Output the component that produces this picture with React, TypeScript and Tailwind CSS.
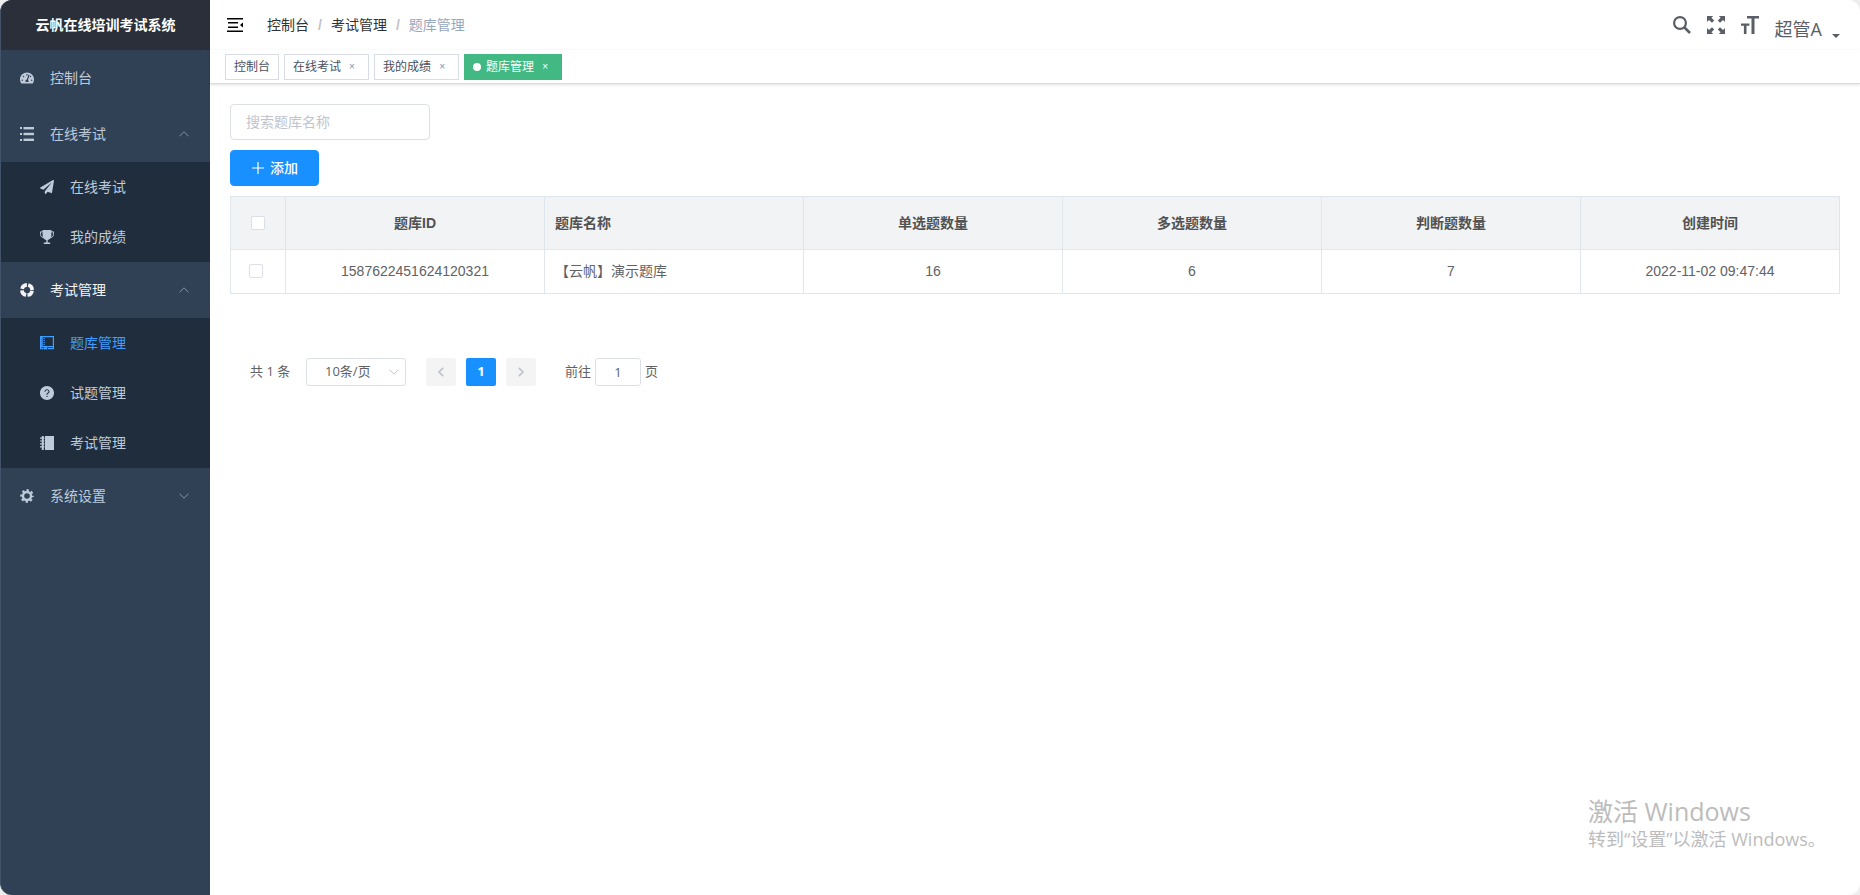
import React from 'react';
import clsx from 'clsx';
import { FaPaperPlane, FaTachometerAlt } from 'react-icons/fa';
import { AiFillQuestionCircle } from 'react-icons/ai';

const ListIcon = () => (
  <svg width="14" height="14" viewBox="0 0 14 14" fill="currentColor">
    <rect x="0" y="0" width="2" height="2" />
    <rect x="0" y="6" width="2" height="2" />
    <rect x="0" y="12" width="2" height="2" />
    <rect x="3.5" y="0" width="10.5" height="2.4" />
    <rect x="3.5" y="5.8" width="10.5" height="2.4" />
    <rect x="3.5" y="11.6" width="10.5" height="2.4" />
  </svg>
);

const TrophyIcon = () => (
  <svg width="14" height="14" viewBox="0 0 14 14" fill="currentColor">
    <path d="M2.6 0h8.8v5.5c0 2.6-1.7 4.2-3.7 4.5v2.6h2.5V14H3.8v-1.4h2.5V10c-2-.3-3.7-1.9-3.7-4.500z" />
    <path
      d="M3 1.800H.6v2.700c0 1.700 1 2.800 2.600 3.100M11 1.800h2.400v2.700c0 1.700-1 2.800-2.600 3.100"
      fill="none"
      stroke="currentColor"
      strokeWidth="1"
    />
  </svg>
);

const LifeRingIcon = () => (
  <svg width="14" height="14" viewBox="0 0 14 14" fill="none" stroke="currentColor">
    <circle cx="7" cy="7" r="5.1" strokeWidth="3.6" strokeDasharray="6.6 1.41" strokeDashoffset="-0.7" />
  </svg>
);

const BankIcon = () => (
  <svg width="14" height="14" viewBox="0 0 14 14" fill="none" stroke="currentColor">
    <path d="M.6.6h12.800v10H.6z" strokeWidth="1.200" />
    <path d="M1.700 1v9.500" strokeWidth="2.400" opacity="0.8" />
    <path d="M4.200 2v7.500" strokeWidth="1.200" strokeDasharray="1 1" />
    <path d="M.6 10.500v2.200h3M8 12.700h5.400v-2" strokeWidth="1.200" />
    <path d="M4 11.200h3.200V14l-1.600-1L4 14z" fill="currentColor" stroke="none" />
  </svg>
);

const NotebookIcon = () => (
  <svg width="14" height="14" viewBox="0 0 14 14" fill="currentColor">
    <path d="M1.800 0h2v14h-2zM5 0h9v14H5z" />
    <path d="M0 1.500h4.500v1.200H0zM0 4.400h4.500v1.200H0zM0 7.300h4.500v1.200H0zM0 10.200h4.500v1.200H0z" />
  </svg>
);

const GearIcon = () => (
  <svg width="14" height="14" viewBox="0 0 14 14" fill="none" stroke="currentColor">
    <circle cx="7" cy="7" r="4" strokeWidth="2.4" />
    <circle cx="7" cy="7" r="5.8" strokeWidth="2" strokeDasharray="2.4 2.155" strokeDashoffset="1.2" />
  </svg>
);

const FoldIcon = () => (
  <svg width="16" height="14" viewBox="0 0 16 14" fill="currentColor">
    <path d="M0 0h16v1.500H0zM1 4h10v1.500H1zM1 8.500h10V10H1zM0 12.500h16V14H0zM16 4.500v5L13 7z" />
  </svg>
);

const SearchIcon = () => (
  <svg width="18" height="18" viewBox="0 0 18 18" fill="none" stroke="currentColor">
    <circle cx="7" cy="7" r="5.900" strokeWidth="2.200" />
    <path d="M11 11l6 6" strokeWidth="2.600" />
  </svg>
);

const FullscreenIcon = () => (
  <svg width="18" height="18" viewBox="0 0 18 18" fill="currentColor">
    <path d="M0 0h6.200L4.400 1.800l2.800 2.800-2.200 2.200L2 3.900 0 6zM18 0v6l-2-2.100-3 2.900-2.200-2.200 2.800-2.800L11.800 0zM0 18v-6l2 2.100 3-2.900 2.200 2.200-2.800 2.800L6.200 18zM18 18h-6.200l1.800-1.800-2.800-2.800 2.200-2.200 3 2.900 2-2.100z" />
  </svg>
);

const FontSizeIcon = () => (
  <svg width="18" height="18" viewBox="0 0 18 18" fill="currentColor">
    <path d="M6 0h12v2.600h-4.500V18h-3V2.600H6zM0 7.500h8.400v2.300H5.500V18h-2.600V9.800H0z" />
  </svg>
);

const PlusIcon = () => (
  <svg width="14" height="14" viewBox="0 0 14 14" stroke="currentColor" strokeWidth="1.200">
    <path d="M7 1v12M1 7h12" />
  </svg>
);

const Arrow = ({ up }: { up?: boolean }) => (
  <svg width="10" height="6" viewBox="0 0 10 6" fill="none" stroke="currentColor">
    <path d={up ? 'M.5 5.300L5 .8l4.500 4.500' : 'M.5.7L5 5.200 9.500.7'} />
  </svg>
);

const PageArrow = ({ next }: { next?: boolean }) => (
  <svg width="6" height="10" viewBox="0 0 6 10" fill="none" stroke="currentColor" strokeWidth="1.700">
    <path d={next ? 'M.8.8L5 5 .8 9.200' : 'M5.200.8L1 5l4.200 4.200'} />
  </svg>
);

interface SubItem {
  title: string;
  icon: React.ReactNode;
  active?: boolean;
}

interface MenuItem {
  title: string;
  icon: React.ReactNode;
  open?: boolean;
  active?: boolean;
  children?: SubItem[];
}

const menus: MenuItem[] = [
  { title: '控制台', icon: <FaTachometerAlt size={14} /> },
  {
    title: '在线考试',
    icon: <ListIcon />,
    open: true,
    children: [
      { title: '在线考试', icon: <FaPaperPlane size={14} /> },
      { title: '我的成绩', icon: <TrophyIcon /> },
    ],
  },
  {
    title: '考试管理',
    icon: <LifeRingIcon />,
    open: true,
    active: true,
    children: [
      { title: '题库管理', icon: <BankIcon />, active: true },
      { title: '试题管理', icon: <AiFillQuestionCircle size={16} /> },
      { title: '考试管理', icon: <NotebookIcon /> },
    ],
  },
  { title: '系统设置', icon: <GearIcon />, children: [] },
];

const tags = [
  { title: '控制台', closable: false },
  { title: '在线考试', closable: true },
  { title: '我的成绩', closable: true },
  { title: '题库管理', closable: true, active: true },
];

const columns = ['题库ID', '题库名称', '单选题数量', '多选题数量', '判断题数量', '创建时间'];

const rows = [['1587622451624120321', '【云帆】演示题库', '16', '6', '7', '2022-11-02 09:47:44']];

const Checkbox = ({ label }: { label: string }) => (
  <input
    type="checkbox"
    aria-label={label}
    className="block size-[14px] appearance-none rounded-xs border border-[#dcdfe6] bg-white checked:bg-[#1890ff]"
  />
);

const Sidebar = () => (
  <aside className="w-[210px] shrink-0 overflow-hidden rounded-l-xl border-l border-[#43546a] bg-[#304156]">
    <h1 className="flex h-[50px] items-center justify-center bg-[#2b2f3a] text-sm font-bold text-white">
      云帆在线培训考试系统
    </h1>
    <nav className="text-sm text-[#bfcbd9]">
      {menus.map((menu) => (
        <div key={menu.title}>
          <a
            href="#"
            className={clsx('flex h-14 items-center pr-[21px] pl-[19px]', menu.active && 'text-[#f4f4f5]')}
          >
            <span className="mr-4 flex w-[14px] justify-center">{menu.icon}</span>
            <span className="flex-1">{menu.title}</span>
            {menu.children && (
              <span className="text-[#8391a2]">
                <Arrow up={menu.open} />
              </span>
            )}
          </a>
          {menu.open && (
            <div className="bg-[#1f2d3d]">
              {menu.children?.map((item) => (
                <a
                  key={item.title}
                  href="#"
                  className={clsx('flex h-[50px] items-center pl-[39px]', item.active && 'text-[#409eff]')}
                >
                  <span className="mr-4 flex w-[14px] justify-center *:shrink-0">{item.icon}</span>
                  {item.title}
                </a>
              ))}
            </div>
          )}
        </div>
      ))}
    </nav>
  </aside>
);

const Navbar = () => (
  <header className="flex h-[50px] items-center justify-between pr-5 pl-[17px] shadow-[0_1px_4px_rgba(0,21,41,0.08)]">
    <div className="flex items-center gap-6">
      <button type="button" aria-label="折叠菜单" className="text-black">
        <FoldIcon />
      </button>
      <nav className="flex items-center gap-[9px] text-sm text-[#303133]">
        <a href="#">控制台</a>
        <span className="font-bold text-[#c0c4cc]">/</span>
        <a href="#">考试管理</a>
        <span className="font-bold text-[#c0c4cc]">/</span>
        <span className="text-[#97a8be]">题库管理</span>
      </nav>
    </div>
    <div className="flex items-center gap-4 text-[#5a5e66]">
      <button type="button" aria-label="搜索">
        <SearchIcon />
      </button>
      <button type="button" aria-label="全屏">
        <FullscreenIcon />
      </button>
      <button type="button" aria-label="字体大小">
        <FontSizeIcon />
      </button>
      <button type="button" className="flex items-end gap-[10px] pt-2 font-['Open_Sans','Noto_Sans_CJK_SC',sans-serif] text-lg leading-6">
        超管A
        <span className="mb-[3px] border-x-4 border-t-4 border-x-transparent border-t-[#5a5e66]" />
      </button>
    </div>
  </header>
);

const TagsView = () => (
  <div className="flex h-[34px] items-center gap-[5px] border-b border-[#d8dce5] bg-white pl-[15px] text-xs shadow-[0_1px_3px_0_rgba(0,0,0,0.12)]">
    {tags.map((tag) => (
      <div
        key={tag.title}
        className={clsx(
          'flex h-[26px] items-center border px-2',
          tag.active ? 'border-[#42b983] bg-[#42b983] text-white' : 'border-[#d8dce5] bg-white text-[#495060]',
        )}
      >
        {tag.active && <span className="mr-[5px] size-2 rounded-full bg-white" />}
        <a href="#">{tag.title}</a>
        {tag.closable && (
          <button
            type="button"
            aria-label={`关闭${tag.title}`}
            className={clsx('ml-[3px] w-4 text-center text-[10px]', tag.active ? 'text-white' : 'text-[#8a8f99]')}
          >
            ×
          </button>
        )}
      </div>
    ))}
  </div>
);

const DataTable = () => (
  <table className="mt-[10px] w-full table-fixed border-collapse text-center text-sm text-[#606266]">
    <colgroup>
      <col className="w-[55px]" />
    </colgroup>
    <thead>
      <tr className="h-[53px] bg-[#f1f3f4] text-[#515151]">
        <th className="border border-[#dfe6ec]">
          <div className="flex justify-center">
            <Checkbox label="全选" />
          </div>
        </th>
        {columns.map((name, i) => (
          <th key={name} className={clsx('border border-[#dfe6ec] px-[10px] font-bold', i === 1 && 'text-left')}>
            {name}
          </th>
        ))}
      </tr>
    </thead>
    <tbody>
      {rows.map((row) => (
        <tr key={row[0]} className="h-11">
          <td className="border border-[#dfe6ec] pb-[2px]">
            <div className="flex justify-center pr-1">
              <Checkbox label={row[1]} />
            </div>
          </td>
          {row.map((cell, i) => (
            <td key={columns[i]} className={clsx('border border-[#dfe6ec] px-[10px] pb-[2px]', i === 1 && 'text-left')}>
              {cell}
            </td>
          ))}
        </tr>
      ))}
    </tbody>
  </table>
);

const Pagination = () => (
  <div className="mt-16 flex h-7 items-center pl-5 font-['Open_Sans','Noto_Sans_CJK_SC',sans-serif] text-[13px] text-[#606266]">
    <span className="w-14">共 1 条</span>
    <div className="relative">
      <select
        aria-label="每页条数"
        className="block h-7 w-[100px] appearance-none rounded-[3px] border border-[#dcdfe6] bg-white pl-[18px]"
      >
        <option>10条/页</option>
        <option>20条/页</option>
        <option>50条/页</option>
      </select>
      <span className="pointer-events-none absolute inset-y-0 right-[7px] flex items-center text-[#c0c4cc]">
        <Arrow />
      </span>
    </div>
    <div className="mx-5 flex gap-[10px]">
      <button type="button" aria-label="上一页" disabled className="flex h-7 w-[30px] items-center justify-center rounded-xs bg-[#f4f4f5] text-[#c0c4cc]">
        <PageArrow />
      </button>
      <button type="button" className="h-7 w-[30px] rounded-xs bg-[#1890ff] font-bold text-white">
        1
      </button>
      <button type="button" aria-label="下一页" disabled className="flex h-7 w-[30px] items-center justify-center rounded-xs bg-[#f4f4f5] text-[#c0c4cc]">
        <PageArrow next />
      </button>
    </div>
    <label className="ml-[9px] flex items-center gap-1">
      前往
      <input
        type="text"
        defaultValue="1"
        className="h-7 w-[46px] rounded-[3px] border border-[#dcdfe6] text-center outline-none"
      />
      页
    </label>
  </div>
);

const App: React.FC = () => {
  return (
    <div className="relative flex min-h-screen bg-[#eeeeee] font-['Liberation_Sans','Noto_Sans_CJK_SC',sans-serif]">
      <Sidebar />
      <div className="min-w-0 flex-1 rounded-r-xl bg-white">
        <Navbar />
        <TagsView />
        <main className="p-5">
          <input
            type="text"
            aria-label="搜索题库名称"
            placeholder="搜索题库名称"
            className="block h-9 w-[200px] rounded border border-[#dcdfe6] px-[15px] text-sm outline-none placeholder:text-[#c0c4cc]"
          />
          <button
            type="button"
            className="mt-[10px] flex h-9 items-center gap-[5px] rounded border border-[#1890ff] bg-[#1890ff] px-5 text-sm font-medium text-white"
          >
            <PlusIcon />
            添加
          </button>
          <DataTable />
          <Pagination />
        </main>
      </div>

      {/* Windows activation notice */}
      <div className="pointer-events-none absolute right-8 bottom-11 w-[240px] font-['Open_Sans','Noto_Sans_CJK_SC',sans-serif] whitespace-nowrap text-[#bcbcbc]">
        <p className="text-[25px] leading-8">激活 Windows</p>
        <p className="text-lg leading-6">转到“设置”以激活 Windows。</p>
      </div>
    </div>
  );
};

export default App;
